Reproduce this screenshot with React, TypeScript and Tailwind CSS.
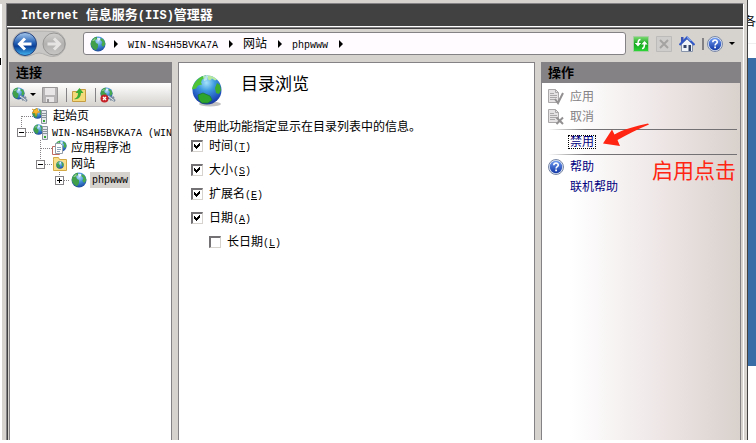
import React, { useState } from 'react';

function Globe({ className = 'size-4' }: { className?: string }) {
  return (
    <svg viewBox="0 0 32 32" className={`shrink-0 ${className}`} aria-hidden="true">
      <defs>
        <radialGradient id="globe-sea" cx="0.48" cy="0.25" r="0.8">
          <stop offset="0" stopColor="#a5e3fb" />
          <stop offset="0.35" stopColor="#3f9be0" />
          <stop offset="0.8" stopColor="#1c49b8" />
          <stop offset="1" stopColor="#1a2f86" />
        </radialGradient>
      </defs>
      <ellipse cx="19" cy="29" rx="11" ry="2.5" fill="#777" opacity="0.45" />
      <circle cx="16" cy="15" r="14.5" fill="url(#globe-sea)" />
      <path d="M3 9C6 4 10 1 15 .5l-1 3-3 1-1 3 1 2-4 1-2 3-4 1c0-2 1-4 2-5.500z" fill="#4fc437" />
      <path d="M16 .5c5 0 8 2 10 4l-2 1-3-2-2 2-2-1z" fill="#b6e8a0" />
      <path d="M12 1l5 0-1 4-3 1z" fill="#d8f3f4" opacity="0.7" />
      <path d="M26 8l3 2 1 5-2 4-3-1-1-5z" fill="#3cad2e" />
      <path d="M7 20l5-2 7 3 2 4-4 3-6 0-3-3z" fill="#2ea52c" stroke="#1c7a35" strokeWidth="0.8" />
    </svg>
  );
}

function SiteGlobe({ className = 'size-4' }: { className?: string }) {
  return (
    <svg viewBox="0 0 16 16" className={`shrink-0 ${className}`} aria-hidden="true">
      <defs>
        <radialGradient id="site-sea" cx="0.5" cy="0.3" r="0.7">
          <stop offset="0" stopColor="#b5dcf6" />
          <stop offset="0.5" stopColor="#3f8bd8" />
          <stop offset="1" stopColor="#1d489c" />
        </radialGradient>
      </defs>
      <circle cx="8" cy="8" r="7.5" fill="url(#site-sea)" />
      <path d="M1 6C2 3 4 1 7 .7L7 3 5 4.500 6 7l2 1 0 3-2 3.500C3 13 1 11 .8 8z" fill="#3f9f4a" />
      <path d="M2 5l3-3 1 1-2 2z" fill="#8fd08a" />
      <path d="M11 2l3 2 1.400 4-2 3-2-2 1-3-2-2z" fill="#48aa4c" />
      <path d="M7 2l3 0 0 2-2 1z" fill="#e4f3fb" />
    </svg>
  );
}

function ServerIcon({ star = false }: { star?: boolean }) {
  return (
    <span className="relative block size-4 shrink-0">
      <SiteGlobe className="size-[11px]" />
      <svg viewBox="0 0 16 16" className="absolute inset-0 size-4" aria-hidden="true">
        <path d="M9.500 2.500h5v13h-5z" fill="#e6eaee" stroke="#8b959e" />
        <path d="M10 5.500h4M10 7.500h4M10 9.500h4" stroke="#8b959e" />
        <path d="M11 13h2" stroke="#35a535" strokeWidth="2" />
        {star && <path d="M0 1l3 1 2-2 1 3 2 1-3 1-1 3-1-3-3 0 2-2z" fill="#f8b72c" stroke="#d98b12" strokeWidth="0.5" />}
      </svg>
    </span>
  );
}

function PoolIcon() {
  return (
    <span className="relative block size-4 shrink-0">
      <SiteGlobe className="absolute top-0 right-0 size-3" />
      <svg viewBox="0 0 16 16" className="absolute inset-0 size-4" aria-hidden="true">
        <path d="M1.500 6.500h7v8h-7z" fill="#fff" stroke="#bf6b62" />
        <path d="M4.500 3.500h5l2 2v8h-7z" fill="#fff" stroke="#929da8" />
        <path d="M6 7.500h4M6 9.500h4M6 11.500h3" stroke="#8fa4bd" />
      </svg>
    </span>
  );
}

function SitesIcon() {
  return (
    <span className="relative block size-4 shrink-0">
      <svg viewBox="0 0 16 16" className="size-4" aria-hidden="true">
        <path d="M1.500 3.500V1.500h5l1 2h7v11h-13z" fill="#f8e08a" stroke="#d3a946" />
      </svg>
      <SiteGlobe className="absolute top-[5px] left-1 size-2" />
    </span>
  );
}

function ConnectIcon({ stop = false }: { stop?: boolean }) {
  return (
    <span className="relative block size-4 shrink-0">
      <SiteGlobe className="size-[13px]" />
      <svg viewBox="0 0 16 16" className="absolute inset-0 size-4" aria-hidden="true">
        <path d="M8 9l7 5M10 13l4-3" stroke="#7f8fa1" strokeWidth="2.5" />
        <path d="M8 9l6 4.500" stroke="#e4eaf0" />
        {stop && (
          <>
            <circle cx="4.500" cy="11.500" r="4" fill="#c5232a" />
            <path d="M3 10l3 3M6 10l-3 3" stroke="#fff" strokeWidth="1.300" />
          </>
        )}
      </svg>
    </span>
  );
}

function HelpIcon() {
  return (
    <svg viewBox="0 0 16 16" className="size-4 shrink-0" aria-hidden="true">
      <defs>
        <linearGradient id="help-blue" x1="0" y1="0" x2="0" y2="1">
          <stop offset="0" stopColor="#6f9af0" />
          <stop offset="1" stopColor="#1137a6" />
        </linearGradient>
      </defs>
      <circle cx="8" cy="8" r="7.5" fill="#dde5f4" stroke="#7a88a5" />
      <circle cx="8" cy="8" r="6.2" fill="url(#help-blue)" />
      <path d="M5.800 6.300C5.800 3.200 10.300 3.400 10.300 6c0 1.600-2.200 1.700-2.200 3.400" fill="none" stroke="#fff" strokeWidth="1.6" />
      <path d="M7.200 10.600h1.800v1.600H7.200z" fill="#fff" />
    </svg>
  );
}

function PageIcon({ kind }: { kind: 'apply' | 'cancel' }) {
  return (
    <svg viewBox="0 0 16 16" className="size-4 shrink-0" aria-hidden="true">
      <path d="M.5 .5h7l3 3v10H.5z" fill="#e4e2e2" stroke="#aaa8a8" />
      <path d="M7.500 .5v3h3M2 4.500h4M2 6.500h7M2 8.500h7M2 10.500h5" fill="none" stroke="#aaa8a8" />
      {kind === 'apply' ? (
        <path d="M7 10l3 4 5-10" fill="none" stroke="#929090" strokeWidth="2" />
      ) : (
        <path d="M8.500 8.500l6.500 6.500M15 8.500l-6.500 6.500" stroke="#929090" strokeWidth="2" />
      )}
    </svg>
  );
}

function Caret({ right = false }: { right?: boolean }) {
  return (
    <svg viewBox="0 0 8 8" className="size-2 shrink-0" aria-hidden="true">
      <path d={right ? 'M2 0l4 4-4 4z' : 'M1 2h6L4 5z'} fill="#000" />
    </svg>
  );
}

/* Half-width latin text between the 12px chinese glyphs */
function Latin({ children }: { children: React.ReactNode }) {
  return <span className="font-['Liberation_Mono',monospace] text-[10px]">{children}</span>;
}

function NavArrows() {
  return (
    <div className="relative flex h-7 w-[54px] shrink-0 items-center">
      <svg viewBox="0 0 54 28" className="h-7 w-[54px]" aria-hidden="true">
        <defs>
          <linearGradient id="back" x1="0" y1="0" x2="0" y2="1">
            <stop offset="0" stopColor="#a9cbed" />
            <stop offset="0.45" stopColor="#2460b5" />
            <stop offset="0.6" stopColor="#0a3f98" />
            <stop offset="1" stopColor="#44b7f2" />
          </linearGradient>
          <linearGradient id="forward" x1="0" y1="0" x2="0" y2="1">
            <stop offset="0" stopColor="#d2d0cf" />
            <stop offset="0.5" stopColor="#b3b1b0" />
            <stop offset="1" stopColor="#c9c7c6" />
          </linearGradient>
        </defs>
        <path d="M13 1.500C22 1 32 1 41 1.500a12 12 0 0 1 0 25C36 27 32 23 27 23s-9 4-14 3.500a12 12 0 0 1 0-25z" fill="#c9c7c5" stroke="#b3b1af" />
        <circle cx="13" cy="14" r="11.5" fill="url(#back)" stroke="#26437e" />
        <path d="M19.500 14H8M13 8.500L7.500 14l5.500 5.500" fill="none" stroke="#fff" strokeWidth="3" />
        <circle cx="42" cy="14" r="11" fill="url(#forward)" stroke="#989695" />
        <path d="M35.500 14H47M42 8.500l5.500 5.500-5.500 5.500" fill="none" stroke="#e6e4e3" strokeWidth="3" />
      </svg>
      <button type="button" aria-label="Back" className="absolute inset-y-0 left-0 w-1/2" />
      <button type="button" aria-label="Forward" className="absolute inset-y-0 right-0 w-1/2" />
    </div>
  );
}

function AddressBar() {
  return (
    <div className="flex h-[33px] shrink-0 items-center pb-1 pl-1">
      <NavArrows />
      <nav className="ml-[17px] flex h-[23px] min-w-0 flex-1 items-center rounded-[3px] border border-[#848284] bg-[#fffbff] pl-1.5">
        <SiteGlobe className="mr-1.5 size-4" />
        <Caret right />
        <a href="#" className="mr-[9px] ml-2"><Latin>WIN-NS4H5BVKA7A</Latin></a>
        <Caret right />
        <a href="#" className="mr-[9px] ml-2">网站</a>
        <Caret right />
        <a href="#" className="mr-[9px] ml-2"><Latin>phpwww</Latin></a>
        <Caret right />
      </nav>
      <div className="flex shrink-0 items-center gap-[7px] px-[7px]">
        <button type="button" aria-label="Refresh">
          <svg viewBox="0 0 16 16" className="size-4">
            <defs>
              <linearGradient id="refresh" x1="0" y1="0" x2="0" y2="1">
                <stop offset="0" stopColor="#7fdc74" />
                <stop offset="0.5" stopColor="#12a51c" />
                <stop offset="1" stopColor="#2fd83a" />
              </linearGradient>
            </defs>
            <path d="M.5 .5h15v15H.5z" fill="url(#refresh)" stroke="#a8cda5" />
            <path d="M7.500 3.500C5.500 3.500 5 5 5 8M9 12.500c2 0 2.500-1.500 2.500-4.500" fill="none" stroke="#fff" strokeWidth="1.6" />
            <path d="M1.800 7h6.400L5 10.500zM8.300 8.500h6.400L11.500 5z" fill="#fff" />
          </svg>
        </button>
        <button type="button" aria-label="Stop">
          <svg viewBox="0 0 16 16" className="size-4">
            <path d="M.5 .5h15v15H.5z" fill="#cfcdcb" stroke="#bdbbb9" />
            <path d="M4 4l8 8M12 4l-8 8" stroke="#a5a3a2" strokeWidth="2" />
          </svg>
        </button>
        <button type="button" aria-label="Home">
          <svg viewBox="0 0 16 16" className="size-4">
            <path d="M2.500 8v7.500h11V8L8 3z" fill="#eef3fa" stroke="#8794aa" />
            <path d="M2 1h2.500v5H2z" fill="#3c53b4" />
            <path d="M.5 9L8 1.500 15.500 9" fill="none" stroke="#3158c7" strokeWidth="2" />
            <path d="M8 0l5 5-2 0-3-3z" fill="#7fa0ea" />
            <path d="M4.500 9h3v3h-3zM9.500 9h2.500v6H9.500z" fill="#33446b" />
          </svg>
        </button>
        <div className="flex items-center">
          <span className="mr-[3px] h-3 w-0.5 bg-[#848284]" />
          <button type="button" aria-label="Help" className="flex items-center gap-[5px]">
            <HelpIcon />
            <Caret />
          </button>
        </div>
      </div>
    </div>
  );
}

function PanelTitle({ children }: { children: React.ReactNode }) {
  return <h2 className="h-[21px] shrink-0 bg-[#848284] pl-1.5 text-[13px] leading-[21px] font-bold">{children}</h2>;
}

function Expander({ open }: { open: boolean }) {
  return (
    <button type="button" aria-label={open ? 'Collapse' : 'Expand'} className="mr-[7px] size-[9px] shrink-0 border border-[#848284] bg-white">
      <svg viewBox="0 0 7 7" className="size-[7px]" shapeRendering="crispEdges">
        <path d={open ? 'M1 3h5v1H1z' : 'M1 3h5v1H1zM3 1h1v5H3z'} />
      </svg>
    </button>
  );
}

function Connections() {
  return (
    <aside className="flex w-[163px] shrink-0 flex-col border-x border-[#848284] bg-white">
      <PanelTitle>连接</PanelTitle>
      <div className="flex h-6 shrink-0 items-center border-b border-[#b5b2b5] bg-linear-to-b from-white to-[#d6d3ce] pl-0.5">
        <button type="button" aria-label="Connect" className="flex items-center gap-px">
          <ConnectIcon />
          <Caret />
        </button>
        <button type="button" aria-label="Save" className="ml-[5px]">
          <svg viewBox="0 0 16 16" className="size-4">
            <path d="M.5 .5h15v15H.5z" fill="#b7b5b6" stroke="#999798" />
            <path d="M3 1h10v7H3zM4 10h8v5H4z" fill="#e8e6e7" />
            <path d="M5 12h2v3H5z" fill="#999798" />
          </svg>
        </button>
        <span className="mr-1 ml-2 h-3.5 w-px bg-[#848284]" />
        <button type="button" aria-label="Up">
          <svg viewBox="0 0 16 16" className="size-4">
            <path d="M1.500 4.500h6l1-2h6v12h-13z" fill="#f5da7b" stroke="#c69c42" />
            <path d="M3 12c3-1 4-3 4-6H4.500L8.500 1l4 5H10c0 4-3 7-7 6z" fill="#3cad35" />
          </svg>
        </button>
        <span className="mr-1 ml-2 h-3.5 w-px bg-[#848284]" />
        <button type="button" aria-label="Disconnect">
          <ConnectIcon stop />
        </button>
      </div>
      <div className="relative flex-1 overflow-hidden pt-px whitespace-nowrap">
        <svg className="absolute inset-0 h-24 w-full" aria-hidden="true" shapeRendering="crispEdges">
          <path d="M11.500 9v12M11.500 9.500h11M16 25.500h7M30.500 33v20M30.500 41.500h11M35 57.500h7M49.500 65v5M54 73.500h6" fill="none" stroke="#848284" strokeDasharray="1 1" />
        </svg>
        <ul className="relative">
          <li className="flex h-4 items-center gap-[5px] pl-[22px]">
            <ServerIcon star />
            <a href="#">起始页</a>
          </li>
          <li className="flex h-4 items-center pl-[7px]">
            <Expander open />
            <ServerIcon />
            <a href="#" className="ml-[3px]"><Latin>WIN-NS4H5BVKA7A (WIN</Latin></a>
          </li>
          <li className="flex h-4 items-center gap-1 pl-[41px]">
            <PoolIcon />
            <a href="#">应用程序池</a>
          </li>
          <li className="flex h-4 items-center pl-[26px]">
            <Expander open />
            <SitesIcon />
            <a href="#" className="ml-[3px]">网站</a>
          </li>
          <li className="flex h-4 items-center pl-[45px]">
            <Expander open={false} />
            <SiteGlobe />
            <a href="#" className="ml-[3px] flex h-4 items-center bg-[#d6d3ce] px-0.5"><Latin>phpwww</Latin></a>
          </li>
        </ul>
      </div>
    </aside>
  );
}

const options = [
  { id: 'time', label: '时间', hotkey: 'T', checked: true },
  { id: 'size', label: '大小', hotkey: 'S', checked: true },
  { id: 'ext', label: '扩展名', hotkey: 'E', checked: true },
  { id: 'date', label: '日期', hotkey: 'A', checked: true },
  { id: 'longdate', label: '长日期', hotkey: 'L', checked: false }
];

function DirectoryBrowsing() {
  const [checked, setChecked] = useState(options.map((o) => o.checked));

  return (
    <main className="min-w-0 flex-1 border-x border-t border-[#848284] bg-white pl-3">
      <div className="flex pt-2.5">
        <Globe className="mt-0.5 size-8" />
        <h1 className="ml-[18px] text-[17px] leading-6">目录浏览</h1>
      </div>
      <p className="mt-[13px] pl-0.5 leading-[14px]">使用此功能指定显示在目录列表中的信息。</p>
      {options.map((o, idx) => (
        <div key={o.id} className={o.id === 'longdate' ? 'flex h-6 items-center pl-[18px]' : 'flex h-6 items-center'}>
          <input
            id={o.id}
            type="checkbox"
            checked={checked[idx]}
            onChange={() => setChecked(checked.map((v, i) => (i === idx ? !v : v)))}
            className="peer size-3 appearance-none border-t-2 border-r border-b border-l-2 border-t-[#737173] border-r-[#d6d3ce] border-b-[#d6d3ce] border-l-[#737173] bg-white"
          />
          <svg viewBox="0 0 12 12" className="pointer-events-none invisible -ml-3 size-3 peer-checked:visible" aria-hidden="true" shapeRendering="crispEdges">
            <path d="M3 4l2 2 4-4v3L5 9 3 7z" />
          </svg>
          <label htmlFor={o.id} className="ml-1.5">
            {o.label}<Latin>(<u>{o.hotkey}</u>)</Latin>
          </label>
        </div>
      ))}
    </main>
  );
}

function Rule() {
  return <hr className="h-px border-0 bg-linear-to-r from-transparent to-[#737173] to-20%" />;
}

function Actions() {
  return (
    <aside className="flex w-[200px] shrink-0 flex-col border-x border-[#848284] bg-linear-to-r from-white from-15% via-[#f0e9e9] via-55% to-[#d9d1cc]">
      <PanelTitle>操作</PanelTitle>
      <div className="relative pt-1 pr-[3px] pl-1.5">
        <button type="button" disabled className="flex h-5 items-center gap-1.5 text-[#848284]"><PageIcon kind="apply" />应用</button>
        <button type="button" disabled className="mb-0.5 flex h-5 items-center gap-1.5 text-[#848284]"><PageIcon kind="cancel" />取消</button>
        <Rule />
        <div className="flex h-6 items-center pl-5">
          <a href="#" className="border border-dotted border-black px-px leading-3 text-[#000080]">禁用</a>
        </div>
        <Rule />
        <a href="#" className="mt-0.5 flex h-5 items-center gap-1.5 text-[#000080]"><HelpIcon />帮助</a>
        <a href="#" className="flex h-5 items-center pl-[22px] text-[#000080]">联机帮助</a>
        <svg viewBox="0 0 48 24" className="absolute top-10 left-[60px] h-6 w-12" aria-hidden="true">
          <path d="M1 20.500L10 6.500l2.500 5C22 6 34 3 46 .5l1 1C36 6 26 11 15.500 17L18 23z" fill="#ff2512" />
        </svg>
        <p className="absolute top-[74px] right-1 text-[21px] leading-7 text-[#ff2512]">启用点击</p>
      </div>
    </aside>
  );
}

export default function App() {
  return (
    <div className="flex h-screen bg-white pb-[3px] font-['Liberation_Sans','Noto_Sans_CJK_SC',sans-serif] text-[12px] text-black">
      <div className="w-[3px] shrink-0 border-t-4 border-r border-[#d6d3ce] pt-[54px]">
        <div className="h-[7px] w-px bg-black" />
      </div>
      <div className="flex min-w-0 flex-1 border-r border-[#424142] bg-[#d6d3ce] pt-[3px] pr-[3px] pl-[3px]">
        <div className="flex min-w-0 flex-1 flex-col border-t border-r border-l border-t-[#848284] border-r-white border-l-[#848284]">
          <header className="h-[23px] shrink-0 border-b border-white bg-[#424142] pl-3.5 text-[13px] leading-[22px] font-bold text-white">
            <span className="font-['Liberation_Mono',monospace] text-[12px]">Internet </span>
            信息服务
            <span className="font-['Liberation_Mono',monospace] text-[12px]">(IIS)</span>
            管理器
          </header>
          <div className="h-0.5 shrink-0 border-t border-[#848284] bg-[#424142]" />
          <div className="flex min-h-0 flex-1 flex-col border-l border-[#424142]">
            <AddressBar />
            <div className="flex min-h-0 flex-1 gap-1.5 pr-0.5 pl-px">
              <Connections />
              <DirectoryBrowsing />
              <Actions />
            </div>
          </div>
        </div>
      </div>
      <div className="w-2 shrink-0 overflow-hidden">
        <div className="flex h-[44px] justify-end border-b border-[#efefef] pt-3 leading-5">各</div>
        <div className="mt-3.5 h-[308px] bg-[#396da5]" />
      </div>
    </div>
  );
}
